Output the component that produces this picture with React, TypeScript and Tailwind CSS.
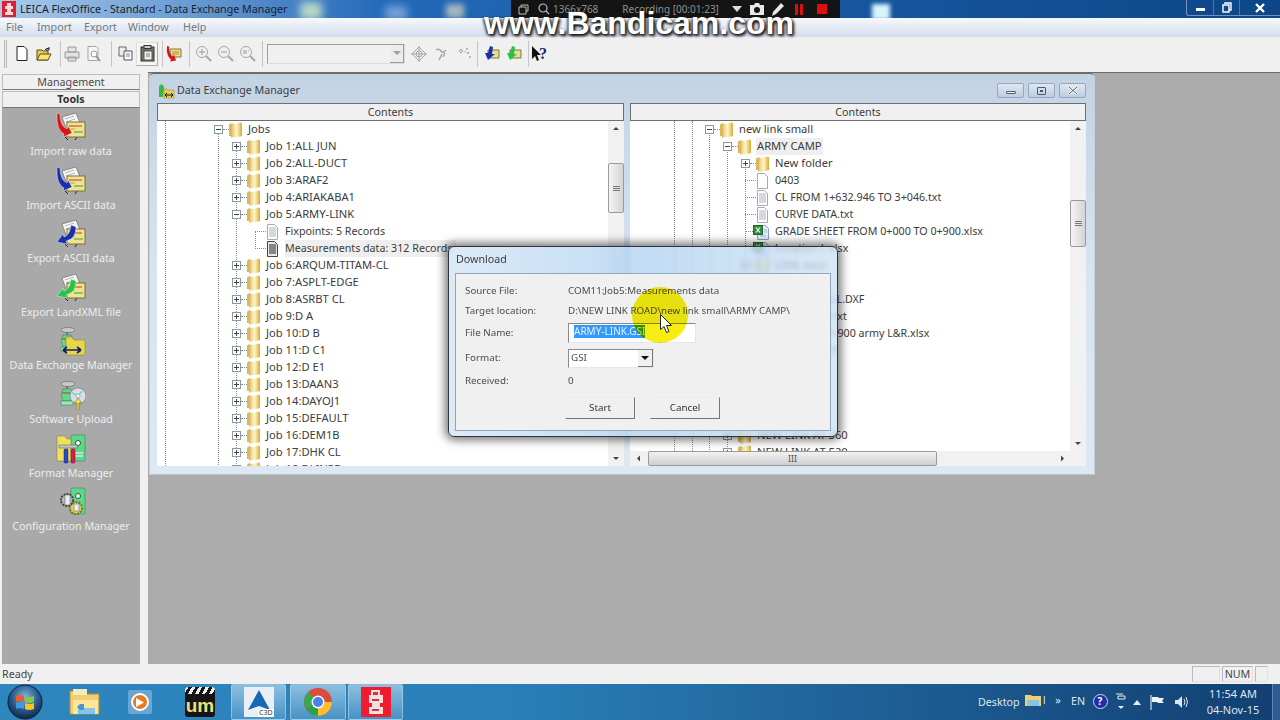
import type { ReactNode } from "react";

const leftRows = [
  "Job 1:ALL JUN",
  "Job 2:ALL-DUCT",
  "Job 3:ARAF2",
  "Job 4:ARIAKABA1",
];

const leftRowsAfter = [
  "Job 6:ARQUM-TITAM-CL",
  "Job 7:ASPLT-EDGE",
  "Job 8:ASRBT CL",
  "Job 9:D A",
  "Job 10:D B",
  "Job 11:D C1",
  "Job 12:D E1",
  "Job 13:DAAN3",
  "Job 14:DAYOJ1",
  "Job 15:DEFAULT",
  "Job 16:DEM1B",
  "Job 17:DHK CL",
  "Job 18:DLIN3B",
];

const menus = [
  { label: "File", width: "w-[31px]" },
  { label: "Import", width: "w-[47px]" },
  { label: "Export", width: "w-[44px]" },
  { label: "Window", width: "w-[55px]" },
  { label: "Help", width: "w-[40px]" },
];

function Expander({ open }: { open?: boolean }) {
  return (
    <svg width="9" height="9" viewBox="0 0 9 9" className="shrink-0">
      <rect x="0.5" y="0.5" width="8" height="8" fill="#fff" stroke="#8b97a3" />
      <path d={open ? "M2 4.5h5" : "M2 4.5h5M4.5 2v5"} stroke="#3c4650" />
    </svg>
  );
}

function FolderIcon() {
  return (
    <svg width="13" height="16" viewBox="0 0 13 16" className="shrink-0">
      <defs>
        <linearGradient id="tree-folder" x1="0" x2="1" y1="0" y2="0">
          <stop offset="0%" stopColor="#d7b552" />
          <stop offset="25%" stopColor="#f3dc96" />
          <stop offset="50%" stopColor="#fdf3c8" />
          <stop offset="75%" stopColor="#f0d37a" />
          <stop offset="100%" stopColor="#d3a83e" />
        </linearGradient>
      </defs>
      <path d="M0 3 1 1.5h3L5 3v11H0z" fill="#d8b85a" />
      <path d="M2 3 11.5.5q1.5 0 1.5 1.5v11.5l-1 1L2 15.5z" fill="url(#tree-folder)" />
    </svg>
  );
}

function DocIcon({ lines, dark }: { lines?: boolean; dark?: boolean }) {
  return (
    <svg width="13" height="16" viewBox="0 0 13 16" className="shrink-0">
      <path d="M1.5.5h7l3 3v12h-10z" fill={dark ? "#e8e8e8" : "#fff"} stroke={dark ? "#444" : "#a5aab0"} />
      {lines && <path d="M3 4h7M3 6h7M3 8h7M3 10h7M3 12h7" stroke={dark ? "#222" : "#a8b2bd"} />}
    </svg>
  );
}

function ExcelIcon() {
  return (
    <svg width="16" height="16" viewBox="0 0 16 16" className="shrink-0">
      <path d="M4.5 1.5h8l3 3v11h-11z" fill="#e6edf8" stroke="#8ea0c4" />
      <rect x="0.5" y="1.5" width="9" height="9" fill="#2f8f3f" stroke="#1d6a2a" />
      <path d="M3 3.5l4 5M7 3.5l-4 5" stroke="#fff" strokeWidth="1.2" />
      <path d="M7 12h6M11 6h3M11 8h3" stroke="#9db4d8" />
    </svg>
  );
}

function Dots({ className }: { className: string }) {
  return <div className={`absolute border-l border-dotted border-[#8a8a8a] ${className}`} />;
}

function Connector({ width }: { width: string }) {
  return <div className={`${width} shrink-0 border-t border-dotted border-[#8a8a8a]`} />;
}

function FolderRow({
  pad,
  open,
  label,
  picked,
}: {
  pad: string;
  open?: boolean;
  label: string;
  picked?: boolean;
}) {
  return (
    <div className={`relative flex h-[17px] items-center whitespace-nowrap ${pad}`}>
      <Expander open={open} />
      <Connector width="w-[6px]" />
      <FolderIcon />
      <span className={`ml-[5px] px-px text-[11.2px] ${picked ? "bg-[#efefef]" : ""}`}>{label}</span>
    </div>
  );
}

function FileRow({
  pad,
  icon,
  label,
  picked,
  conn = "w-[11px]",
  gap = "ml-[6px]",
}: {
  pad: string;
  icon: ReactNode;
  label: string;
  picked?: boolean;
  conn?: string;
  gap?: string;
}) {
  return (
    <div className={`relative flex h-[17px] items-center whitespace-nowrap ${pad}`}>
      <Connector width={conn} />
      {icon}
      <span className={`${gap} pr-1 ${picked ? "bg-[#efefef]" : ""}`}>{label}</span>
    </div>
  );
}

function Thumb({ className }: { className: string }) {
  return (
    <div
      className={`flex items-center justify-center rounded-[2px] border border-[#9a9a9a] bg-gradient-to-r from-[#f4f4f4] to-[#d4d4d4] ${className}`}
    >
      <div className="h-[5px] w-[7px] border-y border-[#777] after:block after:mt-px after:h-px after:bg-[#777]" />
    </div>
  );
}

function VScroll({ thumb }: { thumb: string }) {
  return (
    <div className="relative w-[16px] shrink-0 bg-[#f1f1f1]">
      <svg width="16" height="16" viewBox="0 0 16 16" className="absolute top-0">
        <path d="M8 6l3 3H5z" fill="#444" />
      </svg>
      <Thumb className={`absolute left-0 w-[16px] ${thumb}`} />
      <svg width="16" height="16" viewBox="0 0 16 16" className="absolute bottom-0">
        <path d="M8 10L5 7h6z" fill="#444" />
      </svg>
    </div>
  );
}

function PanelHead() {
  return (
    <div className="flex h-[18px] shrink-0 items-center justify-center border border-[#6e6e6e] bg-[#f0f0f0]">
      Contents
    </div>
  );
}

function LeftPanel() {
  return (
    <div className="flex h-[363px] w-[467px] flex-col bg-white">
      <PanelHead />
      <div className="flex min-h-0 flex-1">
        <div className="relative min-w-0 flex-1 overflow-hidden">
          <Dots className="left-[8px] top-0 h-full" />
          <Dots className="left-[61px] top-[9px] h-full" />
          <Dots className="left-[79px] top-[26px] h-full" />
          <Dots className="left-[98px] top-[110px] h-[18px]" />
          <FolderRow pad="pl-[57px]" open label="Jobs" />
          {leftRows.map((r) => (
            <FolderRow key={r} pad="pl-[75px]" label={r} />
          ))}
          <FolderRow pad="pl-[75px]" open label="Job 5:ARMY-LINK" />
          <FileRow pad="pl-[98px]" conn="w-[11px]" icon={<DocIcon lines />} label="Fixpoints: 5 Records" />
          <FileRow pad="pl-[98px]" conn="w-[11px]" icon={<DocIcon lines dark />} label="Measurements data: 312 Records" picked />
          {leftRowsAfter.map((r) => (
            <FolderRow key={r} pad="pl-[75px]" label={r} />
          ))}
        </div>
        <VScroll thumb="top-[42px] h-[50px]" />
      </div>
    </div>
  );
}

function RightPanel() {
  return (
    <div className="ml-[6px] flex h-[363px] w-[456px] flex-col bg-white">
      <PanelHead />
      <div className="flex min-h-0 flex-1">
        <div className="relative min-w-0 flex-1 overflow-hidden">
          <Dots className="left-[44px] top-0 h-full" />
          <Dots className="left-[62px] top-0 h-full" />
          <Dots className="left-[79px] top-[9px] h-full" />
          <Dots className="left-[97px] top-[26px] h-full" />
          <Dots className="left-[115px] top-[43px] h-[220px]" />
          <FolderRow pad="pl-[75px]" open label="new link small" />
          <FolderRow pad="pl-[93px]" open label="ARMY CAMP" picked />
          <FolderRow pad="pl-[111px]" label="New folder" />
          <FileRow pad="pl-[115px]" icon={<DocIcon />} label="0403" />
          <FileRow pad="pl-[115px]" icon={<DocIcon lines />} label="CL FROM 1+632.946 TO 3+046.txt" />
          <FileRow pad="pl-[115px]" icon={<DocIcon lines />} label="CURVE DATA.txt" />
          <FileRow pad="pl-[115px]" conn="w-[8px]" gap="ml-[6px]" icon={<ExcelIcon />} label="GRADE SHEET FROM 0+000 TO 0+900.xlsx" />
          <FileRow pad="pl-[115px]" conn="w-[8px]" gap="ml-[6px]" icon={<ExcelIcon />} label="Location L.xlsx" />
          <FolderRow pad="pl-[111px]" label="LINK data" />
          <FileRow pad="pl-[115px]" icon={<DocIcon />} label="" />
          <FileRow pad="pl-[115px]" icon={<DocIcon />} label="LONG SEC GL.DXF" />
          <FileRow pad="pl-[115px]" icon={<DocIcon lines />} label="ELEVATION.txt" />
          <FileRow pad="pl-[115px]" conn="w-[8px]" gap="ml-[6px]" icon={<ExcelIcon />} label="0+000 TO 0+900 army L&R.xlsx" />
          <FileRow pad="pl-[115px]" icon={<DocIcon />} label="WIDTH 0009" />
          <div className="h-[68px]" />
          <FolderRow pad="pl-[93px]" label="NEW LINK AT 360" />
          <FolderRow pad="pl-[93px]" label="NEW LINK AT 520" />
        </div>
        <VScroll thumb="top-[79px] h-[47px]" />
      </div>
      <div className="relative flex h-[15px] shrink-0 items-center bg-[#f1f1f1]">
        <svg width="16" height="15" viewBox="0 0 16 15" className="ml-[1px]">
          <path d="M6 7.5l3-3v6z" fill="#444" />
        </svg>
        <div className="ml-[1px] flex h-[15px] w-[289px] items-center justify-center rounded-[2px] border border-[#9a9a9a] bg-gradient-to-b from-[#f2f2f2] to-[#cfcfcf] text-[9px] leading-none text-[#555]">
          III
        </div>
        <svg width="16" height="15" viewBox="0 0 16 15" className="ml-auto mr-[16px]">
          <path d="M10 7.5l-3-3v6z" fill="#444" />
        </svg>
      </div>
    </div>
  );
}

function MdiButton({ children }: { children: ReactNode }) {
  return (
    <div className="flex h-[15px] w-[27px] items-center justify-center rounded-[2px] border border-[#92a8c2] bg-gradient-to-b from-[#dfe8f2] to-[#bccde0]">
      {children}
    </div>
  );
}

function DataWindow() {
  return (
    <div className="absolute left-[1px] top-0 h-[402px] w-[946px] rounded-tl-[5px] rounded-tr-[5px] border border-b-[#b8c2cc] border-x-[#c4d2e0] border-t-[#6a6a6a] bg-gradient-to-b from-[#c3d3e4] via-[#d8e4f0] to-[#dde8f3] px-[7px] text-[#3c3c3c]">
      <div className="flex h-[29px] items-center pt-[4px]">
        <svg width="17" height="16" viewBox="0 0 17 16" className="ml-px shrink-0">
          <path d="M1 14V3l3-2 2 3-1 10z" fill="#39b54a" />
          <path d="M6 6h3l1 1h6v8H6z" fill="#e7cf55" stroke="#8f7d22" strokeWidth="0.5" />
          <path d="M7 12h8M7 12l2-2M7 12l2 2M15 12l-2-2M15 12l-2 2" stroke="#111" />
        </svg>
        <span className="ml-[2px]">Data Exchange Manager</span>
        <div className="ml-auto mr-[1px] flex gap-[4px]">
          <MdiButton>
            <div className="mt-[4px] h-[3px] w-[10px] rounded-[1px] border border-[#4f5a68] bg-white" />
          </MdiButton>
          <MdiButton>
            <div className="flex h-[8px] w-[9px] items-center justify-center rounded-[1px] border border-[#4f5a68]">
              <div className="h-[2px] w-[3px] bg-[#4f5a68]" />
            </div>
          </MdiButton>
          <MdiButton>
            <svg width="10" height="9" viewBox="0 0 10 9">
              <path d="M1 1l8 7M9 1L1 8" stroke="#fff" strokeWidth="2.6" />
              <path d="M1 1l8 7M9 1L1 8" stroke="#4f5a68" strokeWidth="1" />
            </svg>
          </MdiButton>
        </div>
      </div>
      <div className="flex">
        <LeftPanel />
        <RightPanel />
      </div>
    </div>
  );
}

function Arrow({ color, from }: { color: string; from: "import" | "export" }) {
  return from === "import" ? (
    <path d="M1 1l3 1q0 12 7 15l1-3 4 7-9 4 1-3Q0 18 1 1z" fill={color} stroke="#fff" strokeWidth="0.4" />
  ) : (
    <path d="M15 6l5 2q0 12-10 14l1 3-10-2 6-8 1 3q6-2 7-12z" fill={color} stroke="#fff" strokeWidth="0.4" />
  );
}

function DataIcon({ color, from }: { color: string; from: "import" | "export" }) {
  return (
    <svg width="30" height="30" viewBox="0 0 30 30">
      <path d="M6 5l14-4 6 15-14 5z" fill="#f6f6f6" stroke="#444" strokeWidth="0.5" />
      <path d="M9 7l9-3M10 10l9-3M11 13l9-3" stroke="#b5b5b5" />
      <path d="M9 25l3 3M21 25l-2 3" stroke="#222" />
      <rect x="11" y="10" width="18" height="15" fill="#efe390" stroke="#77703a" />
      <path d="M13 14h13" stroke="#c0392b" />
      <path d="M13 17h6" stroke="#c9a227" />
      <path d="M18 20h9" stroke="#3d9a50" />
      <Arrow color={color} from={from} />
    </svg>
  );
}

function Instrument() {
  return (
    <g>
      <ellipse cx="12" cy="4" rx="7" ry="2.5" fill="#c8c8c8" stroke="#555" strokeWidth="0.5" />
      <path d="M11 6v3" stroke="#555" />
      <path d="M7 9h8l3 6-3 6H7l-2-6z" fill="#62d68a" stroke="#2a7a46" strokeWidth="0.5" />
      <rect x="5" y="21" width="12" height="4" fill="#9fe6b6" stroke="#2a7a46" strokeWidth="0.5" />
      <path d="M6 13h8" stroke="#c0392b" />
    </g>
  );
}

function ExchangeIcon() {
  return (
    <svg width="30" height="30" viewBox="0 0 30 30">
      <Instrument />
      <path d="M10 11h6l2 3h11v15H10z" fill="#e8d64a" stroke="#77703a" strokeWidth="0.5" />
      <path d="M7 24h18M7 24l4-3M7 24l4 3M25 24l-4-3M25 24l-4 3" stroke="#101a70" strokeWidth="1.6" fill="none" />
    </svg>
  );
}

function UploadIcon() {
  return (
    <svg width="30" height="30" viewBox="0 0 30 30">
      <Instrument />
      <circle cx="22" cy="16" r="8" fill="#d8dfe4" stroke="#666" strokeWidth="0.5" />
      <circle cx="22" cy="16" r="2" fill="#fff" stroke="#666" strokeWidth="0.5" />
      <path d="M16 13l5 2M26 11l-3 4" stroke="#7fd0d8" strokeWidth="1.5" />
      <path d="M21 30v-7h-3l4-5 4 5h-3v7z" fill="#f0e24c" stroke="#5f5a1e" strokeWidth="0.5" />
    </svg>
  );
}

function FormatIcon() {
  return (
    <svg width="30" height="30" viewBox="0 0 30 30">
      <path d="M1 2h8l2 3h8v22H1z" fill="#efe25a" stroke="#77703a" strokeWidth="0.5" />
      <rect x="15" y="1" width="14" height="26" rx="1" fill="#5fd68c" stroke="#2a7a46" strokeWidth="0.5" />
      <circle cx="22" cy="9" r="2.5" fill="#fff" stroke="#1f5a34" />
      <path d="M18 19h9M18 22h9" stroke="#c8f2d6" strokeWidth="1.5" />
      <path d="M3 11h18l1 3H3z" fill="#c4c4c4" stroke="#555" strokeWidth="0.5" />
      <rect x="8" y="15" width="4" height="14" rx="1" fill="#2b4cc0" stroke="#101a70" strokeWidth="0.5" />
      <rect x="15" y="15" width="4" height="14" rx="1" fill="#d81f4c" stroke="#700f28" strokeWidth="0.5" />
    </svg>
  );
}

function ConfigIcon() {
  return (
    <svg width="30" height="30" viewBox="0 0 30 30">
      <rect x="15" y="1" width="14" height="26" rx="1" fill="#5fd68c" stroke="#2a7a46" strokeWidth="0.5" />
      <circle cx="22" cy="9" r="2.5" fill="#fff" stroke="#1f5a34" />
      <circle cx="20" cy="21" r="6" fill="#e7d84a" stroke="#77703a" strokeWidth="2" strokeDasharray="2 1" />
      <circle cx="11" cy="13" r="6" fill="#b9b9b9" stroke="#444" strokeWidth="2" strokeDasharray="2 1" />
      <rect x="9" y="8" width="5" height="10" fill="#eee" stroke="#555" strokeWidth="0.5" />
      <rect x="18" y="17" width="5" height="7" fill="#eee" stroke="#555" strokeWidth="0.5" />
    </svg>
  );
}

const tools: { label: string; icon: ReactNode }[] = [
  { label: "Import raw data", icon: <DataIcon color="#d8141c" from="import" /> },
  { label: "Import ASCII data", icon: <DataIcon color="#1a2fb0" from="import" /> },
  { label: "Export ASCII data", icon: <DataIcon color="#1a2fb0" from="export" /> },
  { label: "Export LandXML file", icon: <DataIcon color="#27c24a" from="export" /> },
  { label: "Data Exchange Manager", icon: <ExchangeIcon /> },
  { label: "Software Upload", icon: <UploadIcon /> },
  { label: "Format Manager", icon: <FormatIcon /> },
  { label: "Configuration Manager", icon: <ConfigIcon /> },
];

function Sidebar() {
  return (
    <div className="ml-[2px] mt-[2px] flex w-[138px] flex-col">
      <div className="flex h-[16px] items-center justify-center border border-[#bdbdbd] border-b-[#777] bg-[#f0f0f0] text-[#4a4a4a]">
        Management
      </div>
      <div className="mt-px flex h-[17px] items-center justify-center border border-[#bdbdbd] border-b-[#777] bg-[#f0f0f0] font-bold text-[#333]">
        Tools
      </div>
      <div className="flex flex-1 flex-col bg-[#a9a9a9] pt-[3px]">
        {tools.map((t) => (
          <div key={t.label} className="flex h-[53.6px] flex-col items-center text-[#ededed]">
            <div className="h-[32px] pt-px">{t.icon}</div>
            <div className="whitespace-nowrap">{t.label}</div>
          </div>
        ))}
      </div>
    </div>
  );
}

function Cell({ children, w = "w-[22px]" }: { children: ReactNode; w?: string }) {
  return <div className={`flex h-[22px] shrink-0 items-center justify-center ${w}`}>{children}</div>;
}

function Sep({ className }: { className: string }) {
  return <div className={`h-[26px] w-px shrink-0 bg-[#c4c4c4] ${className}`} />;
}

function ToolBar() {
  return (
    <div className="flex h-[35px] shrink-0 items-center bg-[#f0f0f0] pb-[2px]">
      <div className="ml-[4px] h-[28px] w-[3px] shrink-0 border-x border-[#b5b5b5]" />
      <div className="w-[4px] shrink-0" />
      <Cell>
        <svg width="12" height="15" viewBox="0 0 12 15">
          <path d="M1 .5h7l3 3v11H1z" fill="#fff" stroke="#222" />
        </svg>
      </Cell>
      <Cell>
        <svg width="16" height="14" viewBox="0 0 16 14">
          <path d="M1 3h5l1 1h5v9H1z" fill="#e8cd5c" stroke="#5f4f10" />
          <path d="M1 13l3-6h11l-3 6z" fill="#f5e37f" stroke="#5f4f10" />
          <path d="M9 3q2-3 4-1M13 0v3h-3" stroke="#222" fill="none" />
        </svg>
      </Cell>
      <Sep className="ml-[5px]" />
      <Cell>
        <svg width="16" height="16" viewBox="0 0 16 16">
          <path d="M4 1h8v5H4zM1 6h14v6H1zM4 11h8v4H4z" fill="#e2e2e2" stroke="#9a9a9a" />
        </svg>
      </Cell>
      <Cell>
        <svg width="15" height="16" viewBox="0 0 15 16">
          <path d="M1 .5h8l2 2v12H1z" fill="#f6f6f6" stroke="#a5a5a5" />
          <circle cx="7" cy="8" r="3" fill="#fff" stroke="#9a9a9a" />
          <path d="M9 10l4 5" stroke="#8a8a8a" strokeWidth="1.5" />
        </svg>
      </Cell>
      <Sep className="ml-[6px] mr-[2px]" />
      <Cell>
        <svg width="15" height="15" viewBox="0 0 15 15">
          <path d="M1 1h7v9H1z" fill="#eee" stroke="#666" />
          <path d="M6 5h8v9H6z" fill="#fbfbfb" stroke="#555" />
          <path d="M8 8h4M8 10h4" stroke="#888" />
        </svg>
      </Cell>
      <div className="flex h-[24px] w-[22px] shrink-0 items-center justify-center border border-[#dcdcdc] border-b-[#aaa] border-r-[#aaa] bg-[#f6f6f6]">
        <svg width="15" height="17" viewBox="0 0 15 17">
          <rect x="1" y="2" width="13" height="14" fill="#77735f" stroke="#333" />
          <rect x="4" y="0.5" width="7" height="3" fill="#ccc" stroke="#333" />
          <path d="M4 6h8v9H4z" fill="#f1f1f1" stroke="#555" />
          <path d="M6 9h4M6 11h4" stroke="#777" />
        </svg>
      </div>
      <Sep className="ml-[4px]" />
      <Cell>
        <svg width="18" height="17" viewBox="0 0 18 17">
          <path d="M5 4h11v8H5z" fill="#e9dd90" stroke="#7c7840" />
          <path d="M7 7h7M7 9h7" stroke="#b68a2a" />
          <path d="M2 1l2 .5q0 8 4 10l1-2 2 6-6 1 1-2Q1 11 2 1z" fill="#d8141c" />
        </svg>
      </Cell>
      <Sep className="ml-[4px] mr-[2px]" />
      <Cell>
        <svg width="17" height="17" viewBox="0 0 17 17">
          <circle cx="7" cy="7" r="5.5" fill="#f0f0f0" stroke="#a8a8a8" />
          <path d="M4 7h6M7 4v6" stroke="#989898" />
          <path d="M11 11l5 5" stroke="#a8a8a8" strokeWidth="2" />
        </svg>
      </Cell>
      <Cell>
        <svg width="17" height="17" viewBox="0 0 17 17">
          <circle cx="7" cy="7" r="5.5" fill="#f0f0f0" stroke="#a8a8a8" />
          <path d="M4 7h6" stroke="#989898" />
          <path d="M11 11l5 5" stroke="#a8a8a8" strokeWidth="2" />
        </svg>
      </Cell>
      <Cell>
        <svg width="17" height="17" viewBox="0 0 17 17">
          <circle cx="7" cy="7" r="5.5" fill="#f0f0f0" stroke="#a8a8a8" />
          <path d="M5 5v4M7 5v4M9 6h1" stroke="#989898" />
          <path d="M11 11l5 5" stroke="#a8a8a8" strokeWidth="2" />
        </svg>
      </Cell>
      <Sep className="ml-[4px]" />
      <div className="ml-[4px] flex h-[20px] w-[138px] shrink-0 items-center justify-end border border-[#9d9d9d] border-b-[#dcdcdc] border-r-[#dcdcdc] bg-[#f0f0f0]">
        <div className="flex h-[18px] w-[14px] items-center justify-center border-b border-r border-[#9d9d9d] bg-[#ececec]">
          <svg width="8" height="5" viewBox="0 0 8 5">
            <path d="M0 0h8L4 4z" fill="#a0a0a0" />
          </svg>
        </div>
      </div>
      <div className="ml-[2px]" />
      <Cell w="w-[23px]">
        <svg width="16" height="16" viewBox="0 0 16 16" fill="none" stroke="#a5a5a5">
          <path d="M8 1l7 7-7 7-7-7z" />
          <circle cx="8" cy="8" r="3" />
          <path d="M8 0v16M0 8h16" />
        </svg>
      </Cell>
      <Cell w="w-[23px]">
        <svg width="14" height="14" viewBox="0 0 14 14" fill="none" stroke="#a5a5a5">
          <path d="M1 3q3-2 5 1t5-1M7 7l-3 6M10 6l-2 4" strokeWidth="1.5" />
        </svg>
      </Cell>
      <Cell w="w-[23px]">
        <svg width="14" height="14" viewBox="0 0 14 14" fill="#a5a5a5">
          <circle cx="3" cy="4" r="1.5" fill="none" stroke="#a5a5a5" />
          <circle cx="9" cy="2" r="1" />
          <circle cx="10" cy="6" r="1" />
          <circle cx="12" cy="10" r="1" />
          <circle cx="7" cy="5" r="0.7" />
        </svg>
      </Cell>
      <Sep className="ml-[1px]" />
      <div className="ml-[2px]" />
      <Cell>
        <svg width="18" height="17" viewBox="0 0 18 17">
          <path d="M6 5h11v8H6z" fill="#e9dd90" stroke="#7c7840" />
          <path d="M8 1l3 1-1 7h3l-7 6-3-7h3z" fill="#1a2fb0" />
        </svg>
      </Cell>
      <Cell>
        <svg width="18" height="17" viewBox="0 0 18 17">
          <path d="M6 5h11v8H6z" fill="#e9dd90" stroke="#7c7840" />
          <path d="M8 1l3 1-1 7h3l-7 6-3-7h3z" fill="#27c24a" />
        </svg>
      </Cell>
      <Sep className="ml-[4px] mr-[1px]" />
      <Cell>
        <div className="relative h-[18px] w-[18px]">
          <svg width="10" height="16" viewBox="0 0 10 16" className="absolute left-0 top-px">
            <path d="M0 0v13l3-3 2 5 2-1-2-5h4z" fill="#111" />
          </svg>
          <span className="absolute left-[7px] top-[-3px] font-['Liberation_Serif',serif] text-[16px] font-bold text-[#1a2570]">?</span>
        </div>
      </Cell>
    </div>
  );
}

function TitleBar() {
  return (
    <div className="relative flex h-[18px] shrink-0 items-center overflow-hidden bg-gradient-to-r from-[#a9cbea] via-[#2269b8] via-30% to-[#0d4688] text-[#1c222c]">
      <div className="absolute left-[300px] top-[2px] h-[18px] w-[22px] bg-[#b8d8c8] blur-[4px]" />
      <div className="absolute left-[385px] top-[6px] h-[14px] w-[22px] bg-[#7aa3d8] blur-[4px]" />
      <div className="absolute left-[446px] top-[4px] h-[14px] w-[18px] bg-[#a8b8c0] blur-[3px]" />
      <div className="absolute left-[872px] top-[4px] h-[16px] w-[18px] bg-[#d8f4ff] blur-[2px]" />
      <svg width="14" height="16" viewBox="0 0 14 16" className="relative ml-[2px] shrink-0">
        <rect width="14" height="16" fill="#e02030" />
        <path d="M5 2h4v3h2v3H9v3h2v3H3v-3h2V8H3V5h2z" fill="#fbdcdc" />
      </svg>
      <span className="relative ml-[4px] whitespace-nowrap">LEICA FlexOffice - Standard - Data Exchange Manager</span>
      <div className="absolute right-0 top-0 flex h-[16px] w-[94px] rounded-bl-[3px] border-b border-l border-[#6f93bd] text-white">
        <div className="flex w-[27px] items-center justify-center border-r border-[#4c78aa]">
          <div className="mt-[3px] h-[3px] w-[9px] bg-white" />
        </div>
        <div className="flex w-[26px] items-center justify-center border-r border-[#4c78aa]">
          <svg width="10" height="11" viewBox="0 0 10 11" fill="none" stroke="#fff" strokeWidth="1.4">
            <path d="M3 2V1h6v7H7" />
            <path d="M1 3h6v7H1z" />
          </svg>
        </div>
        <div className="flex flex-1 items-center justify-center">
          <svg width="10" height="10" viewBox="0 0 10 10">
            <path d="M1 1l8 8M9 1L1 9" stroke="#fff" strokeWidth="2.4" />
          </svg>
        </div>
      </div>
    </div>
  );
}

function Dialog() {
  return (
    <div className="absolute left-[448px] top-[246px] h-[191px] w-[390px] rounded-[6px] border border-[#30343a] bg-gradient-to-r from-[#d8e8f6]/90 via-[#a7cdf0]/70 to-[#d0e2f3]/80 text-[9.8px] text-[#4c4c4c] shadow-[0_0_10px_3px_rgba(0,0,0,0.55)] backdrop-blur-[2px]">
      <div className="flex h-[26px] items-center pb-px pl-[7px] text-[10.7px] text-[#3c3c3c]">Download</div>
      <div className="mx-[6px] h-[158px] border border-[#8fa6bb] bg-[#f0f0f0] pl-[9px] pt-[7px]">
        <div className="flex h-[20px] items-center">
          <div className="w-[103px]">Source File:</div>
          <div>COM11:Job5:Measurements data</div>
        </div>
        <div className="flex h-[21px] items-center">
          <div className="w-[103px]">Target location:</div>
          <div className="whitespace-nowrap">D:\NEW LINK ROAD\new link small\ARMY CAMP\</div>
        </div>
        <div className="mt-px flex h-[20px] items-center">
          <div className="w-[103px] pt-px">File Name:</div>
          <div className="flex h-[20px] w-[128px] items-center border border-[#8a8a8a] border-b-[#e6e6e6] border-r-[#e6e6e6] bg-white pb-[3px] pl-[5px]">
            <span className="bg-[#3399ff] text-[10px] leading-[13px] text-[#e9f3ff]">ARMY-LINK.GSI</span>
          </div>
        </div>
        <div className="mt-[6px] flex h-[19px] items-center">
          <div className="w-[103px]">Format:</div>
          <div className="flex h-[19px] w-[86px] items-center border border-[#8a8a8a] border-b-[#e6e6e6] border-r-[#e6e6e6] bg-white pl-[2px]">
            GSI
            <div className="ml-auto flex h-[17px] w-[15px] items-center justify-center border-b border-r border-[#777] bg-[#f0f0f0]">
              <svg width="8" height="5" viewBox="0 0 8 5">
                <path d="M0 0h8L4 4z" fill="#111" />
              </svg>
            </div>
          </div>
        </div>
        <div className="mt-[3px] flex h-[20px] items-center">
          <div className="w-[103px]">Received:</div>
          <div>0</div>
        </div>
        <div className="ml-[100px] mt-[6px] flex gap-[15px]">
          <div className="flex h-[22px] w-[70px] items-center justify-center border border-[#ececec] border-b-[#777] border-r-[#777] bg-[#f0f0f0] text-[#333]">
            Start
          </div>
          <div className="flex h-[22px] w-[70px] items-center justify-center border border-[#ececec] border-b-[#777] border-r-[#777] bg-[#f0f0f0] text-[#333]">
            Cancel
          </div>
        </div>
      </div>
    </div>
  );
}

function RecorderBar() {
  return (
    <div className="absolute left-[511px] top-0 flex h-[18px] w-[329px] items-center bg-[#141414] text-[10px] text-[#8f8f8f]">
      <svg width="11" height="11" viewBox="0 0 11 11" fill="none" stroke="#bbb" className="ml-[7px]">
        <path d="M3 3V1h7v6H8M1 3h7v7H1z" />
      </svg>
      <svg width="12" height="12" viewBox="0 0 12 12" fill="none" stroke="#bbb" strokeWidth="1.2" className="ml-[9px]">
        <circle cx="5" cy="5" r="4" />
        <path d="M8 8l3 3" />
      </svg>
      <span className="ml-[3px]">1366x768</span>
      <span className="ml-[24px] whitespace-nowrap">Recording [00:01:23]</span>
      <svg width="10" height="6" viewBox="0 0 10 6" className="ml-[13px]">
        <path d="M0 0h10L5 6z" fill="#ddd" />
      </svg>
      <svg width="14" height="12" viewBox="0 0 14 12" className="ml-[8px]">
        <path d="M0 2h4l1-2h4l1 2h4v10H0z" fill="#e8e8e8" />
        <circle cx="7" cy="7" r="3" fill="#141414" />
      </svg>
      <svg width="12" height="13" viewBox="0 0 12 13" className="ml-[8px]">
        <path d="M9 0l3 3-8 8-4 2 1-4z" fill="#e8e8e8" />
      </svg>
      <svg width="8" height="11" viewBox="0 0 8 11" className="ml-[11px]">
        <path d="M0 0h3v11H0zM5 0h3v11H5z" fill="#d80f0f" />
      </svg>
      <div className="ml-[14px] h-[10px] w-[10px] bg-[#e00f0f]" />
    </div>
  );
}

function StartOrb() {
  return (
    <svg width="36" height="36" viewBox="0 0 36 36">
      <defs>
        <radialGradient id="orb" cx="50%" cy="35%" r="65%">
          <stop offset="0%" stopColor="#7fb6dd" />
          <stop offset="60%" stopColor="#27598c" />
          <stop offset="100%" stopColor="#10263f" />
        </radialGradient>
      </defs>
      <circle cx="18" cy="18" r="17" fill="url(#orb)" stroke="#0d2238" />
      <path d="M9 12q4-2 8 0v6q-4-2-8 0z" fill="#e8612c" />
      <path d="M18 12q4 2 9 0v6q-5 2-9 0z" fill="#8cc63f" />
      <path d="M9 19q4-2 8 0v6q-4-2-8 0z" fill="#3f9be0" />
      <path d="M18 19q4 2 9 0v6q-5 2-9 0z" fill="#f7c325" />
    </svg>
  );
}

function ActiveBox({ w, children }: { w: string; children: ReactNode }) {
  return (
    <div className={`flex h-[36px] shrink-0 items-center justify-center rounded-[2px] border border-[#a8cfe8]/70 bg-gradient-to-b from-[#b8d9ee]/70 to-[#5fa5d2]/50 ${w}`}>
      {children}
    </div>
  );
}

function TaskBar() {
  return (
    <div className="flex h-[36px] shrink-0 items-center bg-gradient-to-r from-[#2f86bd] via-[#2a7fb8] via-40% to-[#123f72] text-white">
      <div className="flex w-[57px] shrink-0 justify-center pr-[8px]">
        <StartOrb />
      </div>
      <div className="flex w-[55px] shrink-0 justify-center">
        <svg width="32" height="28" viewBox="0 0 32 28">
          <path d="M1 3h11l2 3h16v20H1z" fill="#f0cf70" stroke="#b08d36" />
          <rect x="4" y="1" width="14" height="6" fill="#f6e9bd" />
          <path d="M4 12h25v14H4z" fill="#fbe79c" />
          <path d="M9 20h17v6H9z" fill="#88c3e8" />
          <path d="M15 16h-4l-3 3 3 3h4" fill="#4b95ce" />
        </svg>
      </div>
      <div className="flex w-[55px] shrink-0 justify-center">
        <div className="flex h-[24px] w-[24px] items-center justify-center rounded-[2px] bg-[#6aa6d4]">
          <div className="flex h-[18px] w-[18px] items-center justify-center rounded-full border-2 border-white bg-[#e87a1e]">
            <svg width="8" height="9" viewBox="0 0 8 9">
              <path d="M0 0l8 4.5L0 9z" fill="#fff" />
            </svg>
          </div>
        </div>
      </div>
      <div className="ml-[5px] flex w-[56px] shrink-0 justify-center">
        <div className="flex h-[30px] w-[30px] flex-col rounded-[3px] bg-[#151515]">
          <div className="h-[7px] rounded-t-[3px] bg-[repeating-linear-gradient(120deg,#eee_0_3px,#151515_3px_6px)]" />
          <div className="flex flex-1 items-center justify-center font-['Liberation_Sans',sans-serif] text-[19px] font-bold leading-none text-[#e9e27a]">
            um
          </div>
        </div>
      </div>
      <div className="ml-[3px]" />
      <ActiveBox w="w-[55px]">
        <div className="relative flex h-[30px] w-[30px] items-center justify-center bg-[#e9eff4]">
          <svg width="22" height="24" viewBox="0 0 22 24">
            <path d="M11 0l11 20-11-4L0 20z" fill="#1769b4" />
          </svg>
          <span className="absolute bottom-0 right-0 bg-white px-px text-[7px] leading-[8px] text-[#333]">C3D</span>
        </div>
      </ActiveBox>
      <div className="ml-[4px]" />
      <ActiveBox w="w-[56px]">
        <svg width="28" height="28" viewBox="0 0 28 28">
          <circle cx="14" cy="14" r="14" fill="#dd4b39" />
          <path d="M14 14L1.9 21A14 14 0 0 1 4.1 4.1z" fill="#3aa757" />
          <path d="M14 14h14A14 14 0 0 1 9 27z" fill="#fbc02d" />
          <path d="M14 14L2 21a14 14 0 0 0 12 7z" fill="#2e9e4f" />
          <circle cx="14" cy="14" r="6.5" fill="#fff" />
          <circle cx="14" cy="14" r="5" fill="#4a80e8" />
        </svg>
      </ActiveBox>
      <div className="ml-[2px]" />
      <ActiveBox w="w-[55px]">
        <svg width="30" height="30" viewBox="0 0 30 30">
          <rect width="30" height="30" fill="#ee1c2e" />
          <path d="M10 3h9v5h3v8h-3v4h3v7H8v-7h3v-4H8V8h2z" fill="#f9dede" />
          <path d="M12 5h5v3h-5zM11 12h7v2h-7zM11 22h7v2h-7z" fill="#c23a3a" />
        </svg>
      </ActiveBox>
      <div className="flex-1" />
      <div className="flex w-[303px] shrink-0 items-center text-[#dbe6f0]">
        <div className="w-[46px] pl-px pt-[1px]">Desktop</div>
        <div className="flex w-[20px] justify-center pb-[4px]">
          <svg width="16" height="12" viewBox="0 0 16 12">
            <path d="M0 1h6l1 1h9v10H0z" fill="#f0cf70" />
            <path d="M2 6h12v6H2z" fill="#88c3e8" />
          </svg>
        </div>
        <div className="w-[6px] pb-[4px] text-[10px]">l</div>
        <div className="w-[18px] pb-[6px] text-center text-[11px] leading-none">»</div>
        <div className="w-[22px] pb-[2px] text-center">EN</div>
        <div className="flex w-[22px] justify-center pb-[2px]">
          <div className="flex h-[15px] w-[15px] items-center justify-center rounded-full border border-[#cfd8ee] bg-[#1f2fa8] text-[10px] font-bold leading-none text-white">
            ?
          </div>
        </div>
        <div className="flex w-[19px] justify-center pb-[2px]">
          <svg width="12" height="17" viewBox="0 0 12 17" fill="none" stroke="#e8edf3">
            <path d="M3 3h7v3H3zM1 1h7" />
            <path d="M3 13h6l-3 3z" fill="#e8edf3" stroke="none" />
          </svg>
        </div>
        <div className="flex w-[14px] justify-center">
          <svg width="8" height="5" viewBox="0 0 8 5">
            <path d="M0 5l4-5 4 5z" fill="#e8edf3" />
          </svg>
        </div>
        <div className="flex w-[26px] justify-center">
          <svg width="14" height="15" viewBox="0 0 14 15">
            <path d="M1 0v15" stroke="#fff" />
            <path d="M2 2h6l1 1h5l-2 3 2 2H8L7 7H2z" fill="#f1f4f7" />
          </svg>
        </div>
        <div className="flex w-[24px] justify-center">
          <svg width="15" height="14" viewBox="0 0 15 14" fill="none">
            <path d="M0 5h3l4-4v12L3 9H0z" fill="#dfe6ed" />
            <path d="M9 4q2 3 0 6M11 2q3 5 0 10" stroke="#dfe6ed" />
          </svg>
        </div>
        <div className="w-[78px] text-center text-[11px] leading-[16px]">
          <div>11:54 AM</div>
          <div>04-Nov-15</div>
        </div>
        <div className="h-[36px] w-[8px] border-l border-[#5a86b0] bg-[#2d5d90]" />
      </div>
    </div>
  );
}

export default function App() {
  return (
    <div className="relative flex h-[720px] w-[1280px] flex-col overflow-hidden bg-[#f0f0f0] font-['Noto_Sans',sans-serif] text-[10.7px] blur-[0.4px]">
      <TitleBar />
      <div className="flex h-[19px] shrink-0 items-center bg-gradient-to-b from-[#f6f8fc] to-[#d4dded] pl-[6px] text-[#767676]">
        {menus.map((m) => (
          <div key={m.label} className={m.width}>
            {m.label}
          </div>
        ))}
      </div>
      <ToolBar />
      <div className="flex min-h-0 flex-1">
        <div className="flex w-[148px] shrink-0">
          <Sidebar />
        </div>
        <div className="relative flex-1 border-t border-[#6d6d6d] bg-[#ababab]">
          <DataWindow />
        </div>
      </div>
      <div className="flex h-[20px] shrink-0 items-center bg-[#f0f0f0] pl-[2px] text-[#444]">
        Ready
        <div className="ml-auto mr-[12px] flex gap-[2px]">
          <div className="h-[16px] w-[28px] border border-[#e2e2e2] border-l-[#bbb] border-t-[#bbb]" />
          <div className="flex h-[16px] w-[31px] items-center justify-center border border-[#e2e2e2] border-l-[#bbb] border-t-[#bbb]">NUM</div>
          <div className="h-[16px] w-[13px] border border-[#e2e2e2] border-l-[#bbb] border-t-[#bbb]" />
        </div>
      </div>
      <TaskBar />

      <Dialog />
      <div className="absolute left-[632px] top-[287px] h-[56px] w-[56px] rounded-full bg-[#f6ee10] mix-blend-multiply" />
      <svg width="12" height="19" viewBox="0 0 12 19" className="absolute left-[660px] top-[314px]">
        <path d="M.5.5v15l3.5-3 2.5 6 2.5-1-2.5-6h5z" fill="#fff" stroke="#222" />
      </svg>
      <RecorderBar />
      <div className="absolute left-[484px] top-[5px] whitespace-nowrap font-['Liberation_Sans',sans-serif] text-[32px] font-bold leading-[36px] text-white [text-shadow:2px_2px_3px_#111,-1px_1px_3px_#222]">
        www.Bandicam.com
      </div>
    </div>
  );
}
